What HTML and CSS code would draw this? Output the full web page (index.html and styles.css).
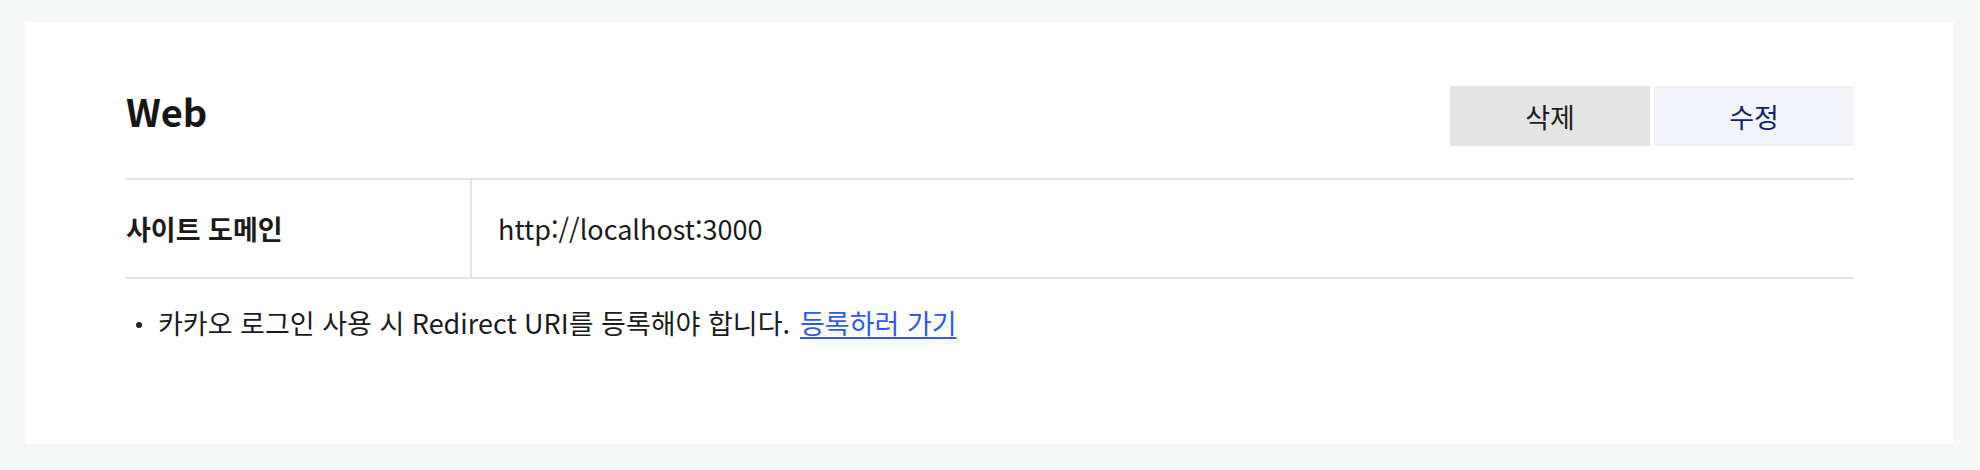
FILE: index.html
```html
<!DOCTYPE html>
<html lang="ko">
<head>
<meta charset="utf-8">
<title>Web</title>
<link rel="stylesheet" href="styles.css">
</head>
<body>
<main class="page">
  <section class="card">
    <header class="card-head">
      <h1 class="title">Web</h1>
      <div class="actions">
        <button class="btn btn-delete" type="button">삭제</button>
        <button class="btn btn-edit" type="button">수정</button>
      </div>
    </header>
    <div class="info-table">
      <div class="info-label">사이트 도메인</div>
      <div class="info-value">http://localhost:3000</div>
    </div>
    <ul class="notes">
      <li class="note"><span class="dot"></span><span class="note-text">카카오 로그인 사용 시 Redirect URI를 등록해야 합니다.</span><a class="note-link" href="#">등록하러 가기</a></li>
    </ul>
  </section>
</main>
</body>
</html>
```

FILE: styles.css
```css
* { box-sizing: border-box; }

html, body {
  margin: 0;
  padding: 0;
  background: #f6f7f7;
}

body {
  font-family: "Noto Sans CJK KR", "Noto Sans", sans-serif;
  color: #1b1b1b;
  font-size: 27px;
}

.page {
  padding: 22px 26px 24px 25px;
}

.card {
  background: #ffffff;
  padding: 64px 100px 100px 101px;
}

.card-head {
  display: flex;
  justify-content: space-between;
  align-items: flex-start;
  margin-bottom: 32px;
}

.title {
  margin: 0;
  font-size: 38px;
  font-weight: 700;
  line-height: 50px;
  color: #161616;
}

.actions {
  display: flex;
  gap: 4px;
}

.btn {
  width: 200px;
  height: 60px;
  border: 0;
  padding: 0;
  font-family: inherit;
  font-size: 27px;
  font-feature-settings: "palt";
  cursor: pointer;
}

.btn-delete {
  background: #e4e4e4;
  color: #1b1b1b;
}

.btn-edit {
  background: #f1f3f9;
  color: #0e2169;
}

.info-table {
  display: grid;
  grid-template-columns: 346px 1fr;
  border-top: 2px solid #e3e3e3;
  border-bottom: 2px solid #e3e3e3;
}

.info-label {
  height: 97px;
  display: flex;
  align-items: center;
  font-weight: 700;
  font-feature-settings: "palt";
  border-right: 2px solid #e3e3e3;
}

.info-value {
  height: 97px;
  display: flex;
  align-items: center;
  padding-left: 26px;
}

.notes {
  list-style: none;
  margin: 23px 0 0 0;
  padding: 0;
}

.note {
  display: flex;
  align-items: center;
  line-height: 42px;
}

.note-text,
.note-link {
  font-feature-settings: "palt";
}

.dot {
  width: 6px;
  height: 6px;
  border-radius: 50%;
  background: #222;
  margin: 4px 16px 0 10px;
  flex: none;
}

.note-link {
  margin-left: 10px;
  color: #3059f0;
  text-decoration: underline;
  text-underline-offset: 3px;
}
```
